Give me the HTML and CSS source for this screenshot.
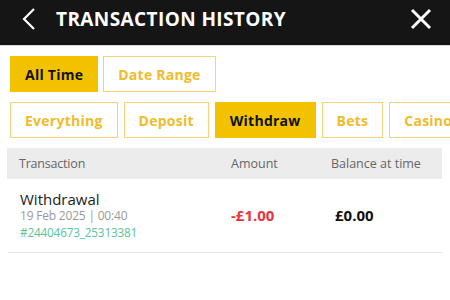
FILE: index.html
```html
<!DOCTYPE html>
<html>
<head>
<meta charset="utf-8">
<link rel="stylesheet" href="styles.css">
</head>
<body>
<header class="topbar">
  <svg class="back" width="14" height="22" viewBox="0 0 14 22"><path d="M12 1 L2 11 L12 21" fill="none" stroke="#fff" stroke-width="2.2"/></svg>
  <h1 class="title">TRANSACTION HISTORY</h1>
  <svg class="close" width="22" height="22" viewBox="0 0 22 22"><path d="M2 2 L20 20 M20 2 L2 20" fill="none" stroke="#fff" stroke-width="3"/></svg>
</header>
<div class="filters">
  <div class="row">
    <span class="btn active">All Time</span>
    <span class="btn">Date Range</span>
  </div>
  <div class="row">
    <span class="btn">Everything</span>
    <span class="btn">Deposit</span>
    <span class="btn active">Withdraw</span>
    <span class="btn">Bets</span>
    <span class="btn">Casino</span>
  </div>
</div>
<div class="table">
  <div class="thead">
    <span>Transaction</span>
    <span>Amount</span>
    <span>Balance at time</span>
  </div>
  <div class="trow">
    <div class="info">
      <div class="type">Withdrawal</div>
      <div class="date">19 Feb 2025 | 00:40</div>
      <div class="ref">#24404673_25313381</div>
    </div>
    <div class="amount">-£1.00</div>
    <div class="balance">£0.00</div>
  </div>
</div>
</body>
</html>
```
FILE: styles.css
```css
* { box-sizing: border-box; }
body {
  margin: 0;
  width: 450px;
  height: 300px;
  overflow: hidden;
  background: #fff;
  font-family: "Open Sans", "DejaVu Sans", sans-serif;
}
.topbar {
  height: 46px;
  background: #151515;
  border-bottom: 1px solid #d8d8d8;
  display: flex;
  align-items: center;
  padding: 0 18px 0 22px;
}
.back { flex: none; margin-top: -8px; }
.title {
  margin: -8px 0 0 20px;
  color: #fff;
  font-size: 19px;
  font-weight: 700;
  letter-spacing: 0.4px;
  flex: 1;
}
.close { flex: none; margin-top: -8px; }
.filters {
  padding: 10px 0 0 10px;
  display: flex;
  flex-direction: column;
  gap: 10px;
  overflow: hidden;
}
.row {
  display: flex;
  gap: 6px;
  white-space: nowrap;
}
.row:first-child { gap: 5px; }
.btn {
  flex: none;
  height: 36px;
  display: flex;
  align-items: center;
  padding: 0 14px;
  border: 1.5px solid #f8d27a;
  color: #f1bb2c;
  font-size: 14px;
  font-weight: 700;
  letter-spacing: 0.25px;
}
.btn.active {
  background: #f2c200;
  border-color: #f2c200;
  color: #111;
}
.table {
  margin: 10px 8px 0 7px;
}
.thead {
  height: 31px;
  background: #ececec;
  display: grid;
  grid-template-columns: 212px 100px 1fr;
  align-items: center;
  padding-left: 12px;
  font-size: 12.5px;
  color: #666;
}
.thead span:first-child { letter-spacing: -0.2px; }
.trow {
  display: grid;
  grid-template-columns: 211px 104px 1fr;
  align-items: center;
  padding: 11px 0 12px 12px;
  border-bottom: 1px solid #e6e6e6;
  margin-left: 1px;
}
.type { font-size: 15px; color: #222; line-height: 18px; }
.date { font-size: 12px; color: #999; line-height: 16px; letter-spacing: -0.2px; }
.ref { font-size: 11.8px; color: #58c49a; line-height: 16px; letter-spacing: -0.2px; }
.amount { color: #e8343a; font-weight: 700; font-size: 15px; }
.balance { color: #111; font-weight: 700; font-size: 15px; }
```
